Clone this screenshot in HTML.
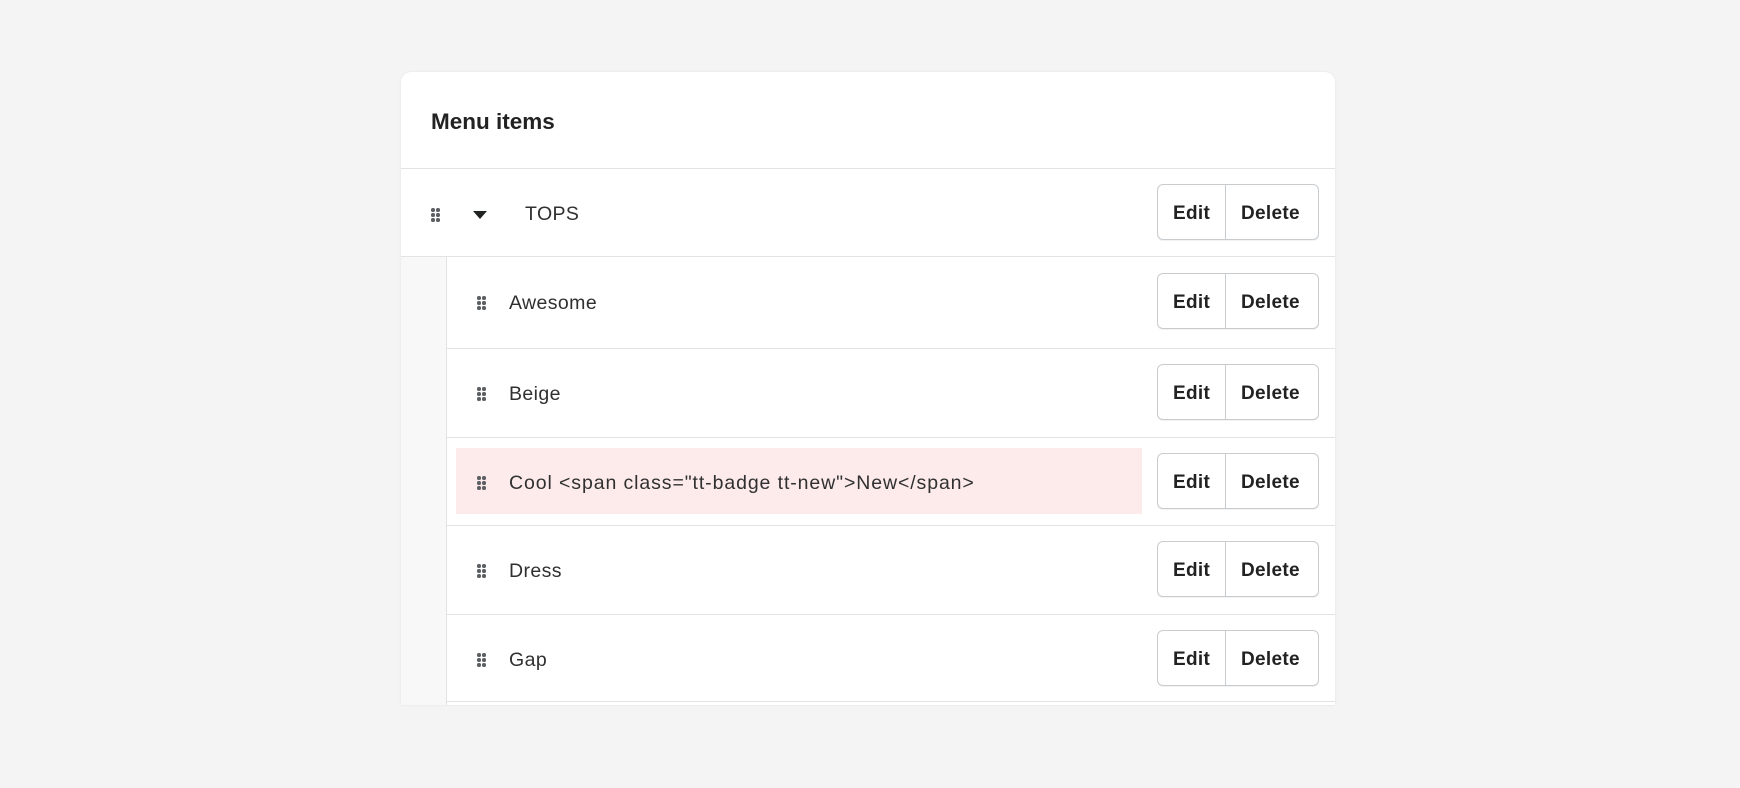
<!DOCTYPE html>
<html><head><style>
*{box-sizing:border-box;margin:0;padding:0}
body{width:1740px;height:788px;background:#f4f4f4;font-family:"Liberation Sans",sans-serif;color:#303030;position:relative;overflow:hidden}
.card{position:absolute;left:401px;top:72px;width:934px;height:633px;background:#fff;border-radius:10px 10px 0 0;box-shadow:0 0 2px rgba(0,0,0,.08);overflow:hidden}
.title{position:absolute;left:30px;top:37px;font-size:22.5px;font-weight:bold;color:#222}
.line{position:absolute;height:1px;background:#e1e3e5;right:0}
.indent{position:absolute;left:0;top:185px;width:46px;height:460px;background:#f7f8f7;border-right:1px solid #e1e3e5}
.dots{position:absolute;width:10px;height:14px}
.dots i{position:absolute;width:3.5px;height:3.5px;border-radius:50%;background:#5c5f62}
.txt{position:absolute;font-size:19.5px;letter-spacing:0.4px;color:#303030}
.btn{position:absolute;left:756px;width:162px;height:56px;border:1px solid #c9cccf;border-radius:6px;background:#fff;box-shadow:0 1px 0 rgba(0,0,0,.05)}
.btn span{position:absolute;top:18px;font-size:19px;font-weight:bold;color:#222;letter-spacing:0.3px}
.btn .d{position:absolute;left:67px;top:0;width:1px;height:54px;background:#c9cccf}
.pink{position:absolute;left:55px;top:376px;width:686px;height:66px;background:#fdebeb}
</style></head><body>
<div class="card">
<div class="title">Menu items</div>
<div class="line" style="left:0;top:96px"></div>
<div class="line" style="left:0;top:184px"></div>
<div class="indent"></div>
<div class="line" style="left:46px;top:276px"></div>
<div class="line" style="left:46px;top:365px"></div>
<div class="line" style="left:46px;top:453px"></div>
<div class="line" style="left:46px;top:542px"></div>
<div class="line" style="left:46px;top:629px"></div>
<div class="pink"></div>

<div class="dots" style="left:30px;top:136px"><i style="left:0;top:0"></i><i style="left:5px;top:0"></i><i style="left:0;top:5px"></i><i style="left:5px;top:5px"></i><i style="left:0;top:10px"></i><i style="left:5px;top:10px"></i></div>
<svg style="position:absolute;left:72px;top:139px" width="14" height="8"><path d="M0 0h14L7 8z" fill="#202223"/></svg>
<div class="txt" style="left:124px;top:131px">TOPS</div>

<div class="dots" style="left:76px;top:224px"><i style="left:0;top:0"></i><i style="left:5px;top:0"></i><i style="left:0;top:5px"></i><i style="left:5px;top:5px"></i><i style="left:0;top:10px"></i><i style="left:5px;top:10px"></i></div>
<div class="txt" style="left:108px;top:220px">Awesome</div>
<div class="dots" style="left:76px;top:315px"><i style="left:0;top:0"></i><i style="left:5px;top:0"></i><i style="left:0;top:5px"></i><i style="left:5px;top:5px"></i><i style="left:0;top:10px"></i><i style="left:5px;top:10px"></i></div>
<div class="txt" style="left:108px;top:311px">Beige</div>
<div class="dots" style="left:76px;top:404px"><i style="left:0;top:0"></i><i style="left:5px;top:0"></i><i style="left:0;top:5px"></i><i style="left:5px;top:5px"></i><i style="left:0;top:10px"></i><i style="left:5px;top:10px"></i></div>
<div class="txt" style="left:108px;top:400px;letter-spacing:0.9px">Cool &lt;span class="tt-badge tt-new"&gt;New&lt;/span&gt;</div>
<div class="dots" style="left:76px;top:492px"><i style="left:0;top:0"></i><i style="left:5px;top:0"></i><i style="left:0;top:5px"></i><i style="left:5px;top:5px"></i><i style="left:0;top:10px"></i><i style="left:5px;top:10px"></i></div>
<div class="txt" style="left:108px;top:488px">Dress</div>
<div class="dots" style="left:76px;top:581px"><i style="left:0;top:0"></i><i style="left:5px;top:0"></i><i style="left:0;top:5px"></i><i style="left:5px;top:5px"></i><i style="left:0;top:10px"></i><i style="left:5px;top:10px"></i></div>
<div class="txt" style="left:108px;top:577px">Gap</div>

<div class="btn" style="top:112px"><span style="left:15px">Edit</span><div class="d"></div><span style="left:83px">Delete</span></div>
<div class="btn" style="top:201px"><span style="left:15px">Edit</span><div class="d"></div><span style="left:83px">Delete</span></div>
<div class="btn" style="top:292px"><span style="left:15px">Edit</span><div class="d"></div><span style="left:83px">Delete</span></div>
<div class="btn" style="top:381px"><span style="left:15px">Edit</span><div class="d"></div><span style="left:83px">Delete</span></div>
<div class="btn" style="top:469px"><span style="left:15px">Edit</span><div class="d"></div><span style="left:83px">Delete</span></div>
<div class="btn" style="top:558px"><span style="left:15px">Edit</span><div class="d"></div><span style="left:83px">Delete</span></div>
</div>
</body></html>
